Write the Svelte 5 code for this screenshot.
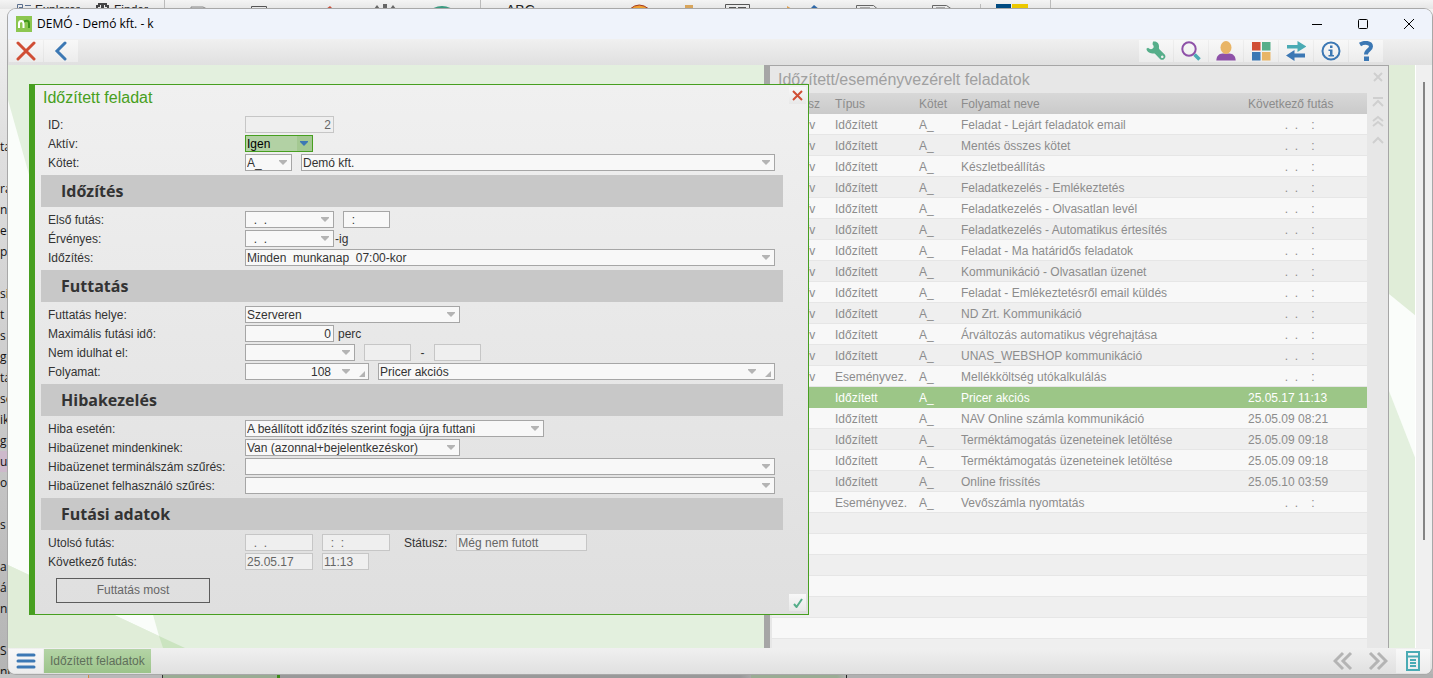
<script>
	const backdropLines = [
		'ta', '', 'ra', 'n', 'ez', 'p', '', 'si', 't a', 's g', 'ge', 'tá', 'se', 'ik', 'ge', 'us',
		'of', '', 's', '', 'ap', 'ás', 'n,', '', 'SN', 'ntúrtás (SA)'
	];

	const empty = '           .  .    :';

	const tasks = [
		['Inaktív', 'Időzített', 'Feladat - Lejárt feladatok email', empty],
		['Inaktív', 'Időzített', 'Mentés összes kötet', empty],
		['Inaktív', 'Időzített', 'Készletbeállítás', empty],
		['Inaktív', 'Időzített', 'Feladatkezelés - Emlékeztetés', empty],
		['Inaktív', 'Időzített', 'Feladatkezelés - Olvasatlan levél', empty],
		['Inaktív', 'Időzített', 'Feladatkezelés - Automatikus értesítés', empty],
		['Inaktív', 'Időzített', 'Feladat - Ma határidős feladatok', empty],
		['Inaktív', 'Időzített', 'Kommunikáció - Olvasatlan üzenet', empty],
		['Inaktív', 'Időzített', 'Feladat - Emlékeztetésről email küldés', empty],
		['Inaktív', 'Időzített', 'ND Zrt. Kommunikáció', empty],
		['Inaktív', 'Időzített', 'Árváltozás automatikus végrehajtása', empty],
		['Inaktív', 'Időzített', 'UNAS_WEBSHOP kommunikáció', empty],
		['Inaktív', 'Eseményvez.', 'Mellékköltség utókalkulálás', empty],
		['Aktív', 'Időzített', 'Pricer akciós', '25.05.17 11:13'],
		['Aktív', 'Időzített', 'NAV Online számla kommunikáció', '25.05.09 08:21'],
		['Aktív', 'Időzített', 'Terméktámogatás üzeneteinek letöltése', '25.05.09 09:18'],
		['Aktív', 'Időzített', 'Terméktámogatás üzeneteinek letöltése', '25.05.09 09:18'],
		['Aktív', 'Időzített', 'Online frissítés', '25.05.10 03:59'],
		['Aktív', 'Eseményvez.', 'Vevőszámla nyomtatás', empty]
	];
	const blankRows = Array(7);

	let selected = $state(13);
</script>

{#snippet arrow()}
	<svg class="arrow" width="8" height="5" viewBox="0 0 8 5"><path d="M0 0h8v1L4 5 0 1z" /></svg>
{/snippet}

{#snippet combo(id, value, size, label = null)}
	<span class="field {size}">
		<select {id} aria-label={label}><option>{value}</option></select>
		{@render arrow()}
	</span>
{/snippet}

{#snippet date(id, value, size, label = null)}
	<span class="field {size}">
		<input type="text" {id} {value} aria-label={label} />
		{@render arrow()}
	</span>
{/snippet}

{#snippet lookup(id, value, size, label = null)}
	<span class="field lookup {size}">
		<input type="text" {id} {value} aria-label={label} />
		{@render arrow()}
		<svg class="corner" width="6" height="6" viewBox="0 0 6 6"><path d="M6 0v6H0z" /></svg>
	</span>
{/snippet}

{#snippet text(id, value, size, disabled = false, label = null)}
	<span class="field {size}" class:disabled>
		<input type="text" {id} {value} {disabled} aria-label={label} />
	</span>
{/snippet}

<div class="desktop">
	<div class="ribbon" aria-hidden="true">
		<svg width="1100" height="9" viewBox="0 0 1100 9" fill="none">
			<path d="M17.500 9V4.500H22.500V9M19 7.500h3M25 5.500h6M25 8.500h6" stroke="#5b6f8f" />
			<path d="M97 9V6h2V4h3v5M103 9V4h3v2h2v3" stroke="#444" stroke-width="2" />
			<path d="M164.500 0v9M480.500 0v9M980.500 4v5M1050.500 0v9" stroke="#bbb" />
			<path d="M191 9V7h12l4 2" fill="#ddd" stroke="#888" />
			<path d="M251.500 9V6.500h15V9M725.500 9V4.500h24V9M729 7.500h7M738 7.500h8" stroke="#555" />
			<path d="M326 9l4-3 3 3z" fill="#c8503c" />
			<path d="M374 9l3-4 3 4zM383 9V4h4v5zM390 9l3-4 3 4z" fill="#666" />
			<path d="M428 9v-1M434 9q8-4 16 0" stroke="#3a9a80" stroke-width="2" />
			<path d="M630 9q9-8 19 0z" fill="#f0a030" stroke="#a33a20" />
			<path d="M685 5h8v4h-8z" fill="#d8a55c" />
			<path d="M787 6l5 3h-5z" fill="#e0a050" />
			<path d="M810 9l4-4 5 4z" fill="#2f68a8" />
			<path d="M856.500 9V5.500h17l4 3.500M860 8h10M932.500 9V5.500h14l5 3.500M936 8h9" stroke="#666" />
			<path d="M996 4h15v5h-15z" fill="#004a80" />
			<path d="M1012 4h16v5h-16z" fill="#ecc800" />
		</svg>
		<span class="peek">Explorer</span>
		<span class="peek finder">Finder</span>
		<span class="peek abc">ABC</span>
	</div>
	<div class="backdrop" aria-hidden="true">
		{#each backdropLines as line, i}
			<div class:marked={i === 15}>{line}</div>
		{/each}
	</div>
	<div class="below" aria-hidden="true"></div>

	<main class="window">
		<header class="titlebar">
			<svg width="16" height="16" viewBox="0 0 16 16" fill="none">
				<path d="M0 0h16v16H0z" fill="#8cc651" />
				<path d="M3 12V7.500Q3 5 5.200 5T7.500 7.500V12" stroke="#fff" stroke-width="2" />
				<path d="M8 5.500q5-2 5 2V12" stroke="#3f971c" stroke-width="2" />
			</svg>
			<h1>DEMÓ - Demó kft. - k</h1>
			<div class="controls">
				<button aria-label="Kis méret"><svg width="12" height="12" viewBox="0 0 12 12"><path d="M1 6.500h10" /></svg></button>
				<button aria-label="Teljes méret"><svg width="12" height="12" viewBox="0 0 12 12"><rect x="1.500" y="1.500" width="9" height="9" rx="1" /></svg></button>
				<button aria-label="Bezárás"><svg width="12" height="12" viewBox="0 0 12 12"><path d="M1 1l10 10M11 1L1 11" /></svg></button>
			</div>
		</header>

		<nav class="toolbar">
			<button aria-label="Kilépés">
				<svg width="20" height="20" viewBox="0 0 20 20"><path d="M2 2l16 16M18 2L2 18" stroke="#d04e35" stroke-width="3" stroke-linecap="round" /></svg>
			</button>
			<button aria-label="Vissza">
				<svg width="20" height="20" viewBox="0 0 20 20" fill="none"><path d="M14 2L6 10l8 8" stroke="#3c78b4" stroke-width="3" stroke-linecap="round" /></svg>
			</button>
			<span class="spacer"></span>
			<button aria-label="Beállítások">
				<svg width="20" height="20" viewBox="0 0 20 20"><path fill="#56ae8a" fill-rule="evenodd" d="M7 0.500C10.500 0 13.200 2 13 5.500c0 1.500-.3 2 .4 2.700l5.300 5.300c2.300 2.800-1.400 7-4.500 4.700L9.200 13c-.8-.8-1.300-.5-2.700-.5C3.200 12.600.6 10 .4 7.800L2 6.800c1.500 1.500 3.300 2 4.700.8S8 4.800 6.500 3.200zM16.200 14.500a1.300 1.300 0 1 0 .1 0z" /></svg>
			</button>
			<button aria-label="Keresés">
				<svg width="20" height="20" viewBox="0 0 20 20" fill="none"><circle cx="8" cy="8" r="6.700" stroke="#8e51a8" stroke-width="2" /><path d="M13.500 13.500l5 5" stroke="#4aabb4" stroke-width="3.500" /></svg>
			</button>
			<button aria-label="Felhasználó">
				<svg width="20" height="20" viewBox="0 0 20 20"><path fill="#8e51a8" d="M.3 19.500C.5 15 3 12.700 6.500 12.500h7c3.500.2 6 2.500 6.200 7z" /><ellipse cx="10" cy="6.500" rx="5.500" ry="6.500" fill="#e9b566" /></svg>
			</button>
			<button aria-label="Modulok">
				<svg width="20" height="20" viewBox="0 0 20 20"><path fill="#d04e35" d="M1 1h8.500v8.500H1z" /><path fill="#56ae8a" d="M11 1h8.500v8.500H11z" /><path fill="#3c78b4" d="M1 11h8.500v8.500H1z" /><path fill="#e9b566" d="M11 11h8.500v8.500H11z" /></svg>
			</button>
			<button aria-label="Váltás">
				<svg width="20" height="20" viewBox="0 0 20 20"><path fill="#4aabb4" d="M1 4h10.500V0L20.500 5.500 11.500 11V7.500H1z" /><path fill="#3c78b4" d="M19 12.500H8.500V9L0 14.500 8.500 20v-3.500H19z" /></svg>
			</button>
			<button aria-label="Információ">
				<svg width="20" height="20" viewBox="0 0 20 20" fill="none"><circle cx="10" cy="10" r="8.500" stroke="#3c78b4" stroke-width="2" /><path d="M9 4.500h2.500V7H9zM7.500 8.500h4V14H13v1.500H7.500V14H9v-4H7.500z" fill="#3c78b4" /></svg>
			</button>
			<button aria-label="Súgó">
				<svg width="20" height="20" viewBox="0 0 20 20" fill="none"><path d="M4 3.500C8.500.8 15 1.500 15 5.500c0 3.500-5 3.200-5 8" stroke="#3c78b4" stroke-width="4" /><path d="M8 15.500h5V20H8z" fill="#3c78b4" /></svg>
			</button>
		</nav>

		<div class="workspace">
			<svg class="wallpaper left" width="190" height="583" viewBox="0 0 190 583">
				<path fill="#fafdfa" d="M0 35l151 536L0 500z" />
				<path fill="#e0edd8" d="M0 500l151 71 4 12H0z" />
				<path fill="#cbe4c0" d="M151 571l26 12h-22z" />
			</svg>
			<svg class="wallpaper right" width="27" height="583" viewBox="0 0 27 583">
				<path fill="#e0edd8" d="M0 0h27v251L0 229z" />
				<path fill="#fafdfa" d="M0 229l27 22v144L0 326z" />
			</svg>

			<section class="panel">
				<div class="panel-main">
					<h2>Időzített/eseményvezérelt feladatok</h2>
					<table>
						<colgroup>
							<col class="c-state" /><col class="c-type" /><col class="c-vol" /><col /><col class="c-next" />
						</colgroup>
						<thead>
							<tr><th>Státusz</th><th>Típus</th><th>Kötet</th><th>Folyamat neve</th><th>Következő futás</th></tr>
						</thead>
						<tbody>
							{#each tasks as [status, type, name, next], i}
								<tr class:selected={i === selected} onclick={() => (selected = i)}>
									<td>{status}</td>
									<td>{type}</td>
									<td>A_</td>
									<td>{name}</td>
									<td>{next}</td>
								</tr>
							{/each}
							{#each blankRows as _}
								<tr><td></td><td></td><td></td><td></td><td></td></tr>
							{/each}
						</tbody>
					</table>
				</div>
				<div class="panel-side">
					<button aria-label="Panel bezárása"><svg width="12" height="12" viewBox="0 0 12 12"><path d="M2 2l8 8M10 2L2 10" /></svg></button>
					<button aria-label="Első"><svg width="12" height="12" viewBox="0 0 12 12"><path d="M1 2h10M1 10l5-5 5 5" /></svg></button>
					<button aria-label="Lapozás fel"><svg width="12" height="12" viewBox="0 0 12 12"><path d="M1 6l5-4 5 4M1 11l5-4 5 4" /></svg></button>
					<button aria-label="Fel"><svg width="12" height="12" viewBox="0 0 12 12"><path d="M1 9l5-5 5 5" /></svg></button>
				</div>
			</section>

			<div class="scrollbar"><div class="thumb"></div></div>

			<form class="dialog" onsubmit={(e) => e.preventDefault()}>
				<header>
					<h2>Időzített feladat</h2>
					<button type="button" class="small" aria-label="Bezár">
						<svg width="11" height="11" viewBox="0 0 11 11"><path d="M1 1l9 9M10 1L1 10" stroke="#d04e35" stroke-width="2" /></svg>
					</button>
				</header>

				<div class="row"><label for="id">ID:</label>{@render text('id', '2', 'w89 num', true)}</div>
				<div class="row"><label for="active">Aktív:</label>{@render combo('active', 'Igen', 'w68 active')}</div>
				<div class="row">
					<label for="volume">Kötet:</label>
					{@render combo('volume', 'A_', 'w47')}
					{@render combo('company', 'Demó kft.', 'grow', 'Cég')}
				</div>

				<h3>Időzítés</h3>
				<div class="row">
					<label for="first">Első futás:</label>
					{@render date('first', '  .  .', 'w89')}
					{@render text('first-time', '  :', 'w47', false, 'Időpont')}
				</div>
				<div class="row">
					<label for="valid">Érvényes:</label>
					<span class="unit tight">{@render date('valid', '  .  .', 'w89')}-ig</span>
				</div>
				<div class="row">
					<label for="schedule">Időzítés:</label>
					{@render combo('schedule', 'Minden\u00a0 munkanap\u00a0 07:00-kor', 'grow')}
				</div>

				<h3>Futtatás</h3>
				<div class="row"><label for="place">Futtatás helye:</label>{@render combo('place', 'Szerveren', 'w215')}</div>
				<div class="row">
					<label for="max">Maximális futási idő:</label>
					<span class="unit">{@render text('max', '0', 'w89 num')}perc</span>
				</div>
				<div class="row">
					<label for="blocked">Nem idulhat el:</label>
					{@render combo('blocked', '', 'w110')}
					{@render text('from', '', 'w47', true, 'Ettől')}
					<span class="dash">-</span>
					{@render text('to', '', 'w47', true, 'Eddig')}
				</div>
				<div class="row">
					<label for="process">Folyamat:</label>
					{@render lookup('process', '108', 'w124 num')}
					{@render lookup('process-name', 'Pricer akciós', 'grow', 'Folyamat neve')}
				</div>

				<h3>Hibakezelés</h3>
				<div class="row">
					<label for="error">Hiba esetén:</label>
					{@render combo('error', 'A beállított időzítés szerint fogja újra futtani', 'w299')}
				</div>
				<div class="row">
					<label for="notify">Hibaüzenet mindenkinek:</label>
					{@render combo('notify', 'Van (azonnal+bejelentkezéskor)', 'w215')}
				</div>
				<div class="row"><label for="terminal">Hibaüzenet terminálszám szűrés:</label>{@render combo('terminal', '', 'grow')}</div>
				<div class="row"><label for="user">Hibaüzenet felhasználó szűrés:</label>{@render combo('user', '', 'grow')}</div>

				<h3>Futási adatok</h3>
				<div class="row">
					<label for="last">Utolsó futás:</label>
					{@render text('last', '  .  .', 'w68', true)}
					{@render text('last-time', '  :  :', 'w68', true, 'Utolsó futás ideje')}
					<label class="inline" for="status">Státusz:</label>
					{@render text('status', 'Még nem futott', 'w131', true)}
				</div>
				<div class="row">
					<label for="next">Következő futás:</label>
					{@render text('next', '25.05.17', 'w68', true)}
					{@render text('next-time', '11:13', 'w47', true, 'Következő futás ideje')}
				</div>

				<footer>
					<button type="button" class="run">Futtatás most</button>
					<button type="submit" class="small" aria-label="Rendben">
						<svg width="10" height="10" viewBox="0 0 10 10" fill="none"><path d="M1 6l2.500 3L9 1" stroke="#56ae8a" stroke-width="2" /></svg>
					</button>
				</footer>
			</form>
		</div>

		<footer class="statusbar">
			<button aria-label="Menü">
				<svg width="20" height="20" viewBox="0 0 20 20"><path d="M2 4h16M2 10h16M2 16h16" stroke="#3c78b4" stroke-width="3" stroke-linecap="round" /></svg>
			</button>
			<button class="task">Időzített feladatok</button>
			<span class="spacer"></span>
			<button class="plain" aria-label="Előző">
				<svg width="20" height="20" viewBox="0 0 20 20" fill="none"><path d="M10 2l-8 8 8 8M18 2l-8 8 8 8" stroke="#b4b4b4" stroke-width="3" /></svg>
			</button>
			<button class="plain" aria-label="Következő">
				<svg width="20" height="20" viewBox="0 0 20 20" fill="none"><path d="M2 2l8 8-8 8M10 2l8 8-8 8" stroke="#b4b4b4" stroke-width="3" /></svg>
			</button>
			<button aria-label="Lista">
				<svg width="20" height="20" viewBox="0 0 20 20" fill="none"><path d="M4 1h12v18H4zM4 5.500h12" stroke="#4aabb4" stroke-width="2" /><path d="M7 9h6M7 12h6M7 15h6" stroke="#4aabb4" stroke-width="2" /></svg>
			</button>
		</footer>
	</main>
</div>

<style>
	:global(body) {
		margin: 0;
		font: 12px/17px 'Liberation Sans', Arial, sans-serif;
		color: #333;
	}

	* {
		box-sizing: border-box;
	}

	h1,
	h2,
	h3 {
		margin: 0;
		font-weight: normal;
	}

	button,
	input,
	select {
		font: inherit;
		color: inherit;
		border: none;
		padding: 0;
		margin: 0;
		background: none;
	}

	svg {
		display: block;
	}

	.desktop {
		position: relative;
		height: 100vh;
		padding: 9px 1px 4px 8px;
		overflow: hidden;
		background: linear-gradient(#f4f4f4, #e0e0e0 20%, #b4b4b4);
	}

	/* the application that shows behind the window */
	.ribbon {
		position: absolute;
		inset: 0 0 auto 0;
		height: 9px;
		overflow: hidden;
		background: linear-gradient(#f4f4f4, #e6e6e6);
	}

	.peek {
		position: absolute;
		top: 2px;
		left: 35px;
		line-height: 16px;
		color: #222;
	}

	.finder {
		left: 114px;
	}

	.abc {
		left: 506px;
		font-size: 14px;
	}

	.backdrop {
		position: absolute;
		top: 136px;
		left: 0;
		font: 12px/21px 'Open Sans', 'Noto Sans', sans-serif;
		color: #111;
		white-space: nowrap;
	}

	.backdrop div {
		height: 21px;
	}

	.marked {
		background: #cdb9cb;
	}

	.below {
		position: absolute;
		inset: auto 0 0 0;
		height: 4px;
		background: linear-gradient(90deg, #c4c4c4 88px, #d08a40 88px 89px, #b8b8b8 89px 162px, #333 162px 163px, #9aac94 163px 277px, #3f8a1c 277px 280px, #999 280px 740px, #a8a8a8 751px, #9aac94 751px 837px, #b0b0b0 846px, #222 846px 847px, #b0b0b0 847px);
	}

	.window {
		position: relative;
		display: flex;
		flex-direction: column;
		height: 100%;
		border-radius: 8px;
		overflow: hidden;
		background: #eee;
		box-shadow: 0 0 0 1px #a8a8a8;
	}

	.titlebar {
		display: flex;
		align-items: center;
		flex: none;
		height: 30px;
		padding-left: 8px;
		background: #eff3fb;
	}

	h1 {
		margin-left: 5px;
		font: 12px/16px 'Open Sans', 'Noto Sans', sans-serif;
		color: #000;
	}

	.controls {
		display: flex;
		margin-left: auto;
	}

	.controls button {
		display: grid;
		place-items: center;
		width: 46px;
		height: 28px;
	}

	.controls svg {
		fill: none;
		stroke: #000;
	}

	.toolbar,
	.statusbar {
		display: flex;
		flex: none;
		gap: 1px;
		height: 26px;
		padding: 1px 1px 3px;
		background: linear-gradient(#f0f0f0, #e0e0e0);
	}

	.toolbar {
		padding-right: 49px;
	}

	.statusbar {
		padding: 1px 2px 1px 1px;
	}

	.toolbar button,
	.statusbar button {
		display: grid;
		place-items: center;
		width: 34px;
		background: linear-gradient(#f8f8f8, #ececec);
	}

	.statusbar .plain {
		background: none;
	}

	.statusbar .task {
		width: auto;
		padding: 0 6px;
		color: #5f6f5a;
		background: linear-gradient(#b4d4a6, #9cc48a);
	}

	.spacer {
		flex: 1;
	}

	.workspace {
		position: relative;
		display: flex;
		justify-content: flex-end;
		flex: 1;
		min-height: 0;
		overflow: hidden;
		background: #e3f0de;
	}

	.wallpaper {
		position: absolute;
		top: 0;
		left: 0;
	}

	.wallpaper.right {
		left: auto;
		right: 16px;
	}

	.panel {
		position: relative;
		display: flex;
		flex: 0 1 625px;
		margin-right: 27px;
		border: solid #a6a6a6;
		border-width: 1px 1px 0 6px;
		background: #e7e7e7;
	}

	.panel-main {
		flex: 1;
		min-width: 0;
		padding-left: 2px;
	}

	.panel h2 {
		padding-left: 6px;
		font-size: 16px;
		line-height: 27px;
		color: #a0a0a0;
		white-space: nowrap;
	}

	table {
		width: 100%;
		table-layout: fixed;
		border-collapse: collapse;
		color: #8c8c8c;
	}

	th,
	td {
		height: 21px;
		padding: 0 0 0 8px;
		text-align: left;
		font-weight: normal;
		line-height: 20px;
		white-space: pre;
	}

	thead {
		background: linear-gradient(#d8d8d8, #cacaca);
	}

	tbody tr {
		background: #f8f8f8;
		box-shadow: inset 0 -1px #e6e6e6;
	}

	tbody tr:nth-child(even) {
		background: #efefef;
	}

	tbody tr.selected {
		color: #fff;
		background: #9cc687;
		box-shadow: none;
	}

	.c-state {
		width: 55px;
	}

	.c-type {
		width: 84px;
	}

	.c-vol {
		width: 42px;
	}

	.c-next {
		width: 127px;
	}

	.panel-side {
		display: flex;
		flex-direction: column;
		align-items: center;
		gap: 7px;
		width: 21px;
		padding-top: 5px;
	}

	.panel-side button:first-child {
		margin-bottom: 6px;
	}

	.panel-side svg {
		fill: none;
		stroke: #cfcfcf;
		stroke-width: 2;
	}

	.scrollbar {
		position: relative;
		flex: none;
		width: 17px;
		margin-left: -1px;
		padding: 17px 7px 0;
		border-left: 1px solid #fff;
		background: #f0f0f0;
	}

	.thumb {
		width: 2px;
		height: 81%;
		background: #858585;
	}

	.dialog {
		position: absolute;
		top: 19px;
		left: 21px;
		width: min(780px, calc(100% - 42px));
		padding-bottom: 3px;
		border: 1px solid #479f20;
		border-left-width: 6px;
		background: linear-gradient(#f0f0f0, #dfdfdf);
	}

	.dialog header {
		display: flex;
		justify-content: space-between;
		align-items: flex-start;
		height: 31px;
		padding: 2px 2px 0 8px;
	}

	.dialog h2 {
		font-size: 16px;
		line-height: 22px;
		color: #479f20;
	}

	.small {
		display: grid;
		place-items: center;
		width: 17px;
		height: 17px;
		background: linear-gradient(#f8f8f8, #e8e8e8);
	}

	.row {
		display: flex;
		gap: 9px;
		height: 17px;
		margin-bottom: 2px;
		padding: 0 33px 0 13px;
		line-height: 19px;
	}

	.row label {
		flex: none;
		width: 197px;
		margin-right: -9px;
		white-space: nowrap;
	}

	.row .inline {
		width: auto;
		margin: 0 0 0 5px;
	}

	h3 {
		margin: 4px 25px 4px 6px;
		padding-left: 20px;
		font: bold 16px/32px 'Open Sans', 'Noto Sans', sans-serif;
		background: #c8c8c8;
	}

	.field {
		position: relative;
		display: flex;
		flex: none;
		height: 17px;
		border: 1px solid #a6a6a6;
		background: #f8f8f8;
	}

	.field input,
	.field select {
		width: 100%;
		min-width: 0;
		height: 15px;
		padding: 1px 1px 0;
		line-height: 14px;
		appearance: none;
		outline: none;
		white-space: pre;
	}

	.num input {
		padding-right: 2px;
		text-align: right;
	}

	.lookup.num input {
		padding-right: 37px;
	}

	.arrow {
		position: absolute;
		top: 5px;
		right: 4px;
		fill: #b4b4b4;
		pointer-events: none;
	}

	.lookup .arrow {
		right: 18px;
	}

	.corner {
		position: absolute;
		right: 3px;
		bottom: 2px;
		fill: #b4b4b4;
	}

	.disabled {
		border-color: #c6c6c6;
		background: #efefef;
		color: #666;
	}

	.active {
		border-color: #479f20;
		background: linear-gradient(90deg, #b2d1a4 51px, #a4c892 51px);
		color: #000;
	}

	.active .arrow {
		fill: #3c78b4;
	}

	.grow {
		flex: 1;
	}

	.w47 {
		width: 47px;
	}

	.w68 {
		width: 68px;
	}

	.w89 {
		width: 89px;
	}

	.w110 {
		width: 110px;
	}

	.w124 {
		width: 124px;
	}

	.w131 {
		width: 131px;
	}

	.w215 {
		width: 215px;
	}

	.w299 {
		width: 299px;
	}

	.unit {
		display: flex;
		gap: 4px;
	}

	.unit.tight {
		gap: 1px;
	}

	.dash {
		width: 5px;
		text-align: center;
	}

	.dialog footer {
		display: flex;
		justify-content: space-between;
		align-items: flex-end;
		margin-top: 5px;
		padding: 0 2px 0 21px;
	}

	.run {
		width: 154px;
		height: 25px;
		margin: 3px 0 8px;
		border: 1px solid #5c5c5c;
		color: #666;
	}
</style>
